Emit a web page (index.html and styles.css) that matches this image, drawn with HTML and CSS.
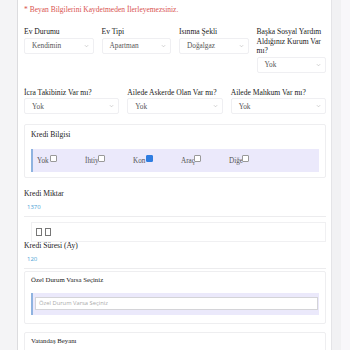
FILE: index.html
```html
<!DOCTYPE html>
<html lang="tr">
<head>
    <meta charset="UTF-8">
    <title>Beyan Bilgileri</title>
    <link rel="stylesheet" href="styles.css">
</head>
<body>
    <div class="left-gap"></div>
    <div class="panel">
        <p class="notice">* Beyan Bilgilerini Kaydetmeden İlerleyemezsiniz.</p>

        <div class="row row-4">
            <div class="field">
                <label>Ev Durumu</label>
                <div class="select">Kendimin<svg viewBox="0 0 6 4"><path d="M1 1l2 2 2-2"/></svg></div>
            </div>
            <div class="field">
                <label>Ev Tipi</label>
                <div class="select">Apartman<svg viewBox="0 0 6 4"><path d="M1 1l2 2 2-2"/></svg></div>
            </div>
            <div class="field">
                <label>Isınma Şekli</label>
                <div class="select">Doğalgaz<svg viewBox="0 0 6 4"><path d="M1 1l2 2 2-2"/></svg></div>
            </div>
            <div class="field">
                <label>Başka Sosyal Yardım Aldığınız Kurum Var mı?</label>
                <div class="select">Yok<svg viewBox="0 0 6 4"><path d="M1 1l2 2 2-2"/></svg></div>
            </div>
        </div>

        <div class="row row-3">
            <div class="field">
                <label>İcra Takibiniz Var mı?</label>
                <div class="select">Yok<svg viewBox="0 0 6 4"><path d="M1 1l2 2 2-2"/></svg></div>
            </div>
            <div class="field">
                <label>Ailede Askerde Olan Var mı?</label>
                <div class="select">Yok<svg viewBox="0 0 6 4"><path d="M1 1l2 2 2-2"/></svg></div>
            </div>
            <div class="field">
                <label>Ailede Mahkum Var mı?</label>
                <div class="select">Yok<svg viewBox="0 0 6 4"><path d="M1 1l2 2 2-2"/></svg></div>
            </div>
        </div>

        <div class="card">
            <div class="card-title">Kredi Bilgisi</div>
            <div class="options">
                <div class="option"><span class="opt-label">Yok</span><span class="box"></span></div>
                <div class="option"><span class="opt-label">İhtiy</span><span class="box"></span></div>
                <div class="option"><span class="opt-label">Kon</span><span class="box checked"></span></div>
                <div class="option"><span class="opt-label">Araç</span><span class="box"></span></div>
                <div class="option"><span class="opt-label">Diğe</span><span class="box"></span></div>
            </div>
        </div>

        <div class="amount">
            <label>Kredi Miktar</label>
            <div class="value">1370</div>
        </div>

        <div class="icon-row"><span class="tofu"></span><span class="tofu"></span></div>

        <div class="amount amount-tight">
            <label>Kredi Süresi (Ay)</label>
            <div class="value">120</div>
        </div>

        <div class="card card-small">
            <div class="card-title">Özel Durum Varsa Seçiniz</div>
            <div class="input-wrap">
                <div class="input">Özel Durum Varsa Seçiniz</div>
            </div>
        </div>

        <div class="card card-small card-last">
            <div class="card-title">Vatandaş Beyanı</div>
        </div>
    </div>
    <div class="right-strip"></div>
    <div class="right-strip light"></div>
</body>
</html>
```

FILE: styles.css
```css
body {
    margin: 0;
    background-color: #f4f4f6;
    display: flex;
    height: 350px;
    overflow: hidden;
    font-family: "Liberation Serif", serif;
    color: #333;
}
.left-gap {
    width: 17px;
    flex: none;
}
.panel {
    width: 302px;
    flex: none;
    background-color: #fff;
    border-left: 1px solid #dcdcdf;
    border-right: 1px solid #e4e4e7;
    padding: 5px 5px 0 6px;
    overflow: hidden;
}
.right-strip {
    width: 9px;
    flex: none;
    background-color: #f1f1f3;
}
.right-strip.light {
    background-color: #f8f7fa;
}
.notice {
    margin: 0;
    font-size: 7.5px;
    color: #d9534f;
    line-height: 10px;
}
.row {
    display: grid;
    gap: 8px;
    align-items: start;
}
.row-4 {
    grid-template-columns: repeat(4, 1fr);
    margin-top: 12px;
}
.row-3 {
    grid-template-columns: repeat(3, 1fr);
    margin-top: 15px;
}
.field label, .amount label {
    display: block;
    font-size: 7.6px;
    line-height: 9.6px;
    color: #222;
    margin-bottom: 1px;
}
.select {
    height: 14px;
    border: 1px solid #efeff2;
    border-radius: 2px;
    font-size: 7.3px;
    color: #555;
    padding: 0 4px 0 7px;
    display: flex;
    align-items: center;
    justify-content: space-between;
}
.select svg {
    width: 5px;
    height: 4px;
    fill: none;
    stroke: #bbb;
    stroke-width: 0.8;
}
.card {
    border: 1px solid #eeeef0;
    border-radius: 2px;
    margin-top: 10px;
    padding: 5px 6px 5px;
}
.card-title {
    font-size: 7.6px;
    color: #222;
    line-height: 9px;
    margin-bottom: 10px;
}
.options {
    background-color: #ebe9fb;
    border-left: 2px solid #8fb3e0;
    height: 23px;
    display: flex;
    align-items: center;
    padding-left: 4px;
}
.option {
    width: 48px;
    display: flex;
    align-items: center;
    font-size: 7.2px;
    color: #555;
}
.opt-label {
    width: 13px;
    white-space: nowrap;
}
.box {
    width: 5px;
    height: 5px;
    border: 1px solid #999;
    border-radius: 1px;
    background-color: #fff;
    position: relative;
    top: -2px;
}
.box.checked {
    background-color: #2f7de1;
    border-color: #2f7de1;
}
.amount {
    margin-top: 11px;
    border-bottom: 1px solid #ececee;
    padding-bottom: 4px;
}
.amount-tight {
    margin-top: -1px;
}
.value {
    font-family: "Open Sans", sans-serif;
    font-size: 6px;
    color: #4a9fd5;
    padding-left: 3px;
    margin-top: 4px;
    line-height: 9px;
}
.icon-row {
    margin: 5px 0 0 7px;
    height: 18px;
    border: 1px solid #f0f0f2;
    display: flex;
    align-items: center;
    gap: 3px;
    padding-left: 4px;
}
.tofu {
    width: 4px;
    height: 6px;
    border: 1px solid #777;
}
.card-small {
    margin-top: 2px;
    padding: 3px 6px 8px;
}
.card-small .card-title {
    font-size: 6.8px;
    margin-bottom: 9px;
}
.input-wrap {
    background-color: #ebe9fb;
    border-left: 2px solid #8fb3e0;
    padding: 4px 1px 5px 2px;
}
.input {
    background-color: #fff;
    border: 1px solid #d4d4d8;
    height: 11px;
    display: flex;
    align-items: center;
    padding-left: 3px;
    font-family: "Open Sans", sans-serif;
    font-size: 5.8px;
    color: #aaa;
}
.card-last {
    margin-top: 8px;
    height: 40px;
}
```
